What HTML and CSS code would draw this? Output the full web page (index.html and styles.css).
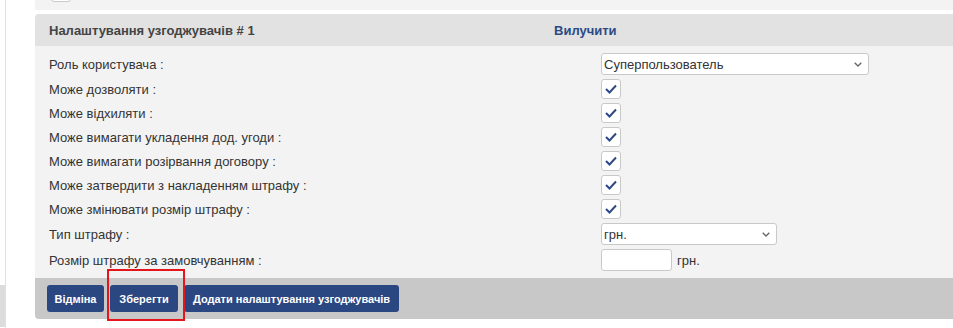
FILE: index.html
```html
<!DOCTYPE html>
<html lang="uk">
<head>
<meta charset="utf-8">
<title>Налаштування узгоджувачів</title>
<link rel="stylesheet" href="styles.css">
</head>
<body>
<div class="page">
  <aside class="side">
    <div class="side-top"></div>
    <div class="side-block"></div>
  </aside>
  <main class="main">
    <div class="prev">
      <span class="cb cb-prev"></span>
    </div>
    <section class="card">
      <header class="card-head">
        <span class="card-title">Налаштування узгоджувачів # 1</span>
        <a class="remove">Вилучити</a>
      </header>
      <div class="card-body">
        <div class="row">
          <span class="label">Роль користувача :</span>
          <div class="sel sel-wide">
            <span class="sel-text">Суперпользователь</span>
            <svg class="chev" width="8" height="5" viewBox="0 0 8 5"><polyline points="0.7,0.7 4,4 7.3,0.7" fill="none" stroke="#666" stroke-width="1.3"/></svg>
          </div>
        </div>
        <div class="row">
          <span class="label">Може дозволяти :</span>
          <span class="cb"><svg width="18" height="18" viewBox="0 0 18 18"><polyline points="4,9 7.5,12.5 14,5.5" fill="none" stroke="#2c4a85" stroke-width="2"/></svg></span>
        </div>
        <div class="row">
          <span class="label">Може відхиляти :</span>
          <span class="cb"><svg width="18" height="18" viewBox="0 0 18 18"><polyline points="4,9 7.5,12.5 14,5.5" fill="none" stroke="#2c4a85" stroke-width="2"/></svg></span>
        </div>
        <div class="row">
          <span class="label">Може вимагати укладення дод. угоди :</span>
          <span class="cb"><svg width="18" height="18" viewBox="0 0 18 18"><polyline points="4,9 7.5,12.5 14,5.5" fill="none" stroke="#2c4a85" stroke-width="2"/></svg></span>
        </div>
        <div class="row">
          <span class="label">Може вимагати розірвання договору :</span>
          <span class="cb"><svg width="18" height="18" viewBox="0 0 18 18"><polyline points="4,9 7.5,12.5 14,5.5" fill="none" stroke="#2c4a85" stroke-width="2"/></svg></span>
        </div>
        <div class="row">
          <span class="label">Може затвердити з накладенням штрафу :</span>
          <span class="cb"><svg width="18" height="18" viewBox="0 0 18 18"><polyline points="4,9 7.5,12.5 14,5.5" fill="none" stroke="#2c4a85" stroke-width="2"/></svg></span>
        </div>
        <div class="row">
          <span class="label">Може змінювати розмір штрафу :</span>
          <span class="cb"><svg width="18" height="18" viewBox="0 0 18 18"><polyline points="4,9 7.5,12.5 14,5.5" fill="none" stroke="#2c4a85" stroke-width="2"/></svg></span>
        </div>
        <div class="row">
          <span class="label">Тип штрафу :</span>
          <div class="sel sel-narrow">
            <span class="sel-text">грн.</span>
            <svg class="chev" width="8" height="5" viewBox="0 0 8 5"><polyline points="0.7,0.7 4,4 7.3,0.7" fill="none" stroke="#666" stroke-width="1.3"/></svg>
          </div>
        </div>
        <div class="row">
          <span class="label">Розмір штрафу за замовчуванням :</span>
          <div class="amount">
            <span class="inp"></span>
            <span class="unit">грн.</span>
          </div>
        </div>
      </div>
      <footer class="card-foot">
        <button class="btn btn-cancel">Відміна</button>
        <button class="btn btn-save">Зберегти<span class="mark"></span></button>
        <button class="btn btn-add">Додати налаштування узгоджувачів</button>
      </footer>
    </section>
  </main>
</div>
</body>
</html>
```

FILE: styles.css
```css
* { box-sizing: border-box; }
html, body { margin: 0; padding: 0; background: #fff; }
body {
  font-family: "Liberation Sans", Arial, sans-serif;
  font-size: 13px;
  color: #333;
  width: 953px;
  height: 328px;
  overflow: hidden;
}
.page {
  display: flex;
  height: 328px;
}
.side {
  width: 6px;
  flex: none;
  display: flex;
  flex-direction: column;
  border-right: 1px solid #e0e0e0;
}
.side-top { flex: 1; }
.side-block {
  height: 42px;
  margin-bottom: 1px;
  background: #dcdcdc;
}
.main {
  margin-left: 29px;
  flex: 1;
  min-width: 0;
}
.prev {
  height: 10px;
  background: #f3f3f3;
  overflow: hidden;
  padding-left: 16px;
  margin-bottom: 4px;
}
.cb {
  width: 20px;
  height: 20px;
  border: 1px solid #c9c9c9;
  border-radius: 3px;
  background: #fff;
  display: flex;
  align-items: center;
  justify-content: center;
}
.cb-prev {
  margin-top: -18px;
}
.card {
  border-radius: 4px 0 0 4px;
}
.card-head {
  height: 32px;
  background: #e2e2e2;
  border-radius: 4px 0 0 0;
  display: flex;
  align-items: center;
  padding-left: 14px;
  font-weight: bold;
  font-size: 13px;
}
.card-title {
  width: 505px;
  color: #444;
}
.remove {
  color: #2c4a85;
  cursor: pointer;
}
.card-body {
  background: #f3f3f3;
  padding: 7px 0 7px 14px;
  display: flex;
  flex-direction: column;
  gap: 4px;
}
.row {
  display: grid;
  grid-template-columns: 552px auto;
  align-items: center;
}
.label { color: #333; }
.sel {
  height: 22px;
  border: 1px solid #c9c9c9;
  border-radius: 3px;
  background: #fff;
  display: flex;
  align-items: center;
  justify-content: space-between;
  padding: 0 6px 0 2px;
  color: #333;
}
.sel-wide { width: 268px; }
.sel-narrow { width: 176px; }
.chev { display: block; }
.amount {
  display: flex;
  align-items: center;
  gap: 5px;
}
.inp {
  width: 71px;
  height: 22px;
  border: 1px solid #c9c9c9;
  border-radius: 3px;
  background: #fff;
}
.unit { color: #333; }
.card-foot {
  height: 41px;
  background: #c8c8c8;
  border-radius: 0 0 0 4px;
  padding: 7px 12px;
  display: flex;
  gap: 6px;
  align-items: flex-start;
}
.btn {
  height: 27px;
  padding: 0;
  border: none;
  border-radius: 3px;
  background: #2b4781;
  color: #fff;
  font-family: "Liberation Sans", Arial, sans-serif;
  font-weight: bold;
  font-size: 11px;
  text-align: center;
}
.btn-cancel { width: 57px; }
.btn-save {
  position: relative;
  width: 68px;
}
.btn-add { width: 215px; }
.mark {
  position: absolute;
  left: -3px;
  top: -16px;
  width: 78px;
  height: 52px;
  border: 2px solid #e4161b;
}
```
